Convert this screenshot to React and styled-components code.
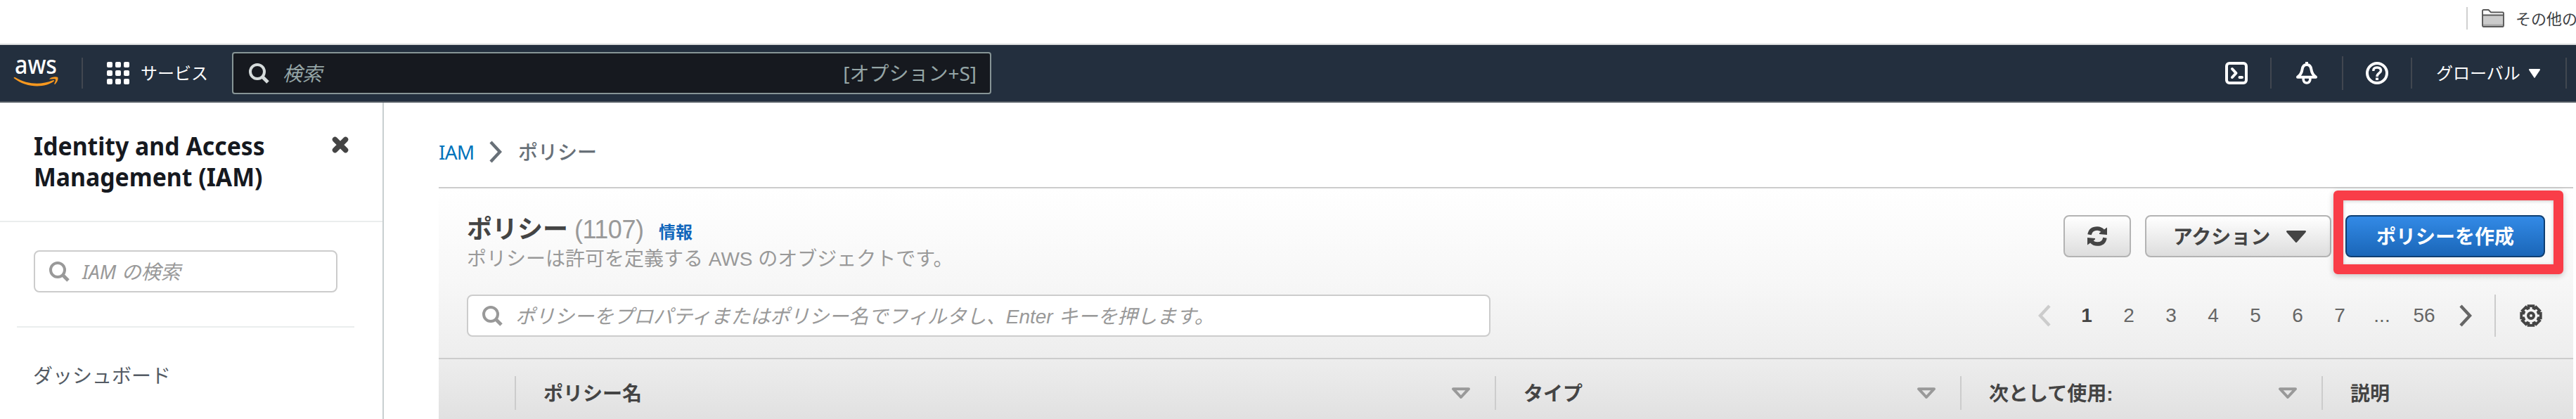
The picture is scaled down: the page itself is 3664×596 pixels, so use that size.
import React from "react";
import styled, { createGlobalStyle, css } from "styled-components";

const Global = createGlobalStyle`
  * { box-sizing: border-box; }
  html, body { margin: 0; background: #fff; overflow: hidden; }
  body { font-family: "Liberation Sans", "Noto Sans CJK JP", sans-serif; font-size: 28px; color: #444; }
  svg { flex: none; }
`;

const ember = css`font-family: "Noto Sans", "Noto Sans CJK JP", sans-serif;`;

const Page = styled.div`width: 3664px; height: 596px; overflow: hidden; display: flex; flex-direction: column;`;

const BookmarkBar = styled.div`
  height: 64px; flex: none; border-bottom: 2px solid #dadcdc; background: #fff;
  display: flex; align-items: flex-start; justify-content: flex-end; padding-top: 10px; overflow: hidden;
`;
const BookmarkFolder = styled.div`
  display: flex; align-items: center; gap: 16px; width: 156px; height: 32px; border-left: 2px solid #d0d0d0;
  padding-left: 20px; font-size: 22px; color: #3c4043; white-space: nowrap;
  span { padding-bottom: 3px; }
`;

const Nav = styled.header`
  ${ember} height: 82px; flex: none; background: #232f3e; border-bottom: 2px solid #545b64;
  display: flex; align-items: center; padding-left: 19px; color: #fff; font-size: 24px;
`;
const Rule = styled.i`display: block; flex: none; width: 2px; height: ${p => p.$h}px; background: ${p => p.$c || "#414750"};`;
const Label = styled.span`padding-bottom: 3px;`;
const Services = styled.div`display: flex; align-items: center; gap: 16px; margin-left: 34px; width: 178px; white-space: nowrap;`;
const NavSearch = styled.div`
  width: 1080px; height: 60px; background: #16191f; border: 2px solid #879596; border-radius: 4px; color: #95a5a6;
  display: flex; align-items: center; padding: 0 19px 0 22px; font-size: 28px;
  em { margin-left: 19px; flex: 1; padding-bottom: 2px; }
  svg { color: #d5dbdb; }
`;
const NavRight = styled.div`margin-left: auto; display: flex; align-items: center; height: 100%;`;
const NavItem = styled.div`display: flex; align-items: center; justify-content: center; width: ${p => p.$w}px;`;
const Region = styled(NavItem)`justify-content: flex-start; padding-left: 34px; gap: 12px;`;

const Body = styled.div`flex: 1; display: flex; min-height: 0;`;
const Sidebar = styled.aside`${ember} width: 546px; flex: none; border-right: 2px solid #c8cfd0; color: #16191f;`;
const SideHead = styled.div`
  height: 170px; border-bottom: 2px solid #eaeded; padding: 40px 48px 0 48px;
  display: flex; justify-content: space-between; align-items: flex-start;
  svg { margin-top: 8px; }
`;
const SideTitle = styled.h2`
  margin: 0; font-size: 35px; line-height: 44px; font-weight: 700; white-space: nowrap; width: 340px;
  transform: scaleX(0.965); transform-origin: left;
`;
const SideSearchArea = styled.div`margin: 0 40px 0 24px; padding: 40px 24px 48px; border-bottom: 2px solid #eaeded;`;
const SideLink = styled.div`padding: 46px 0 0 47px; font-size: 28px; line-height: 44px; color: #545b64;`;

const SearchField = styled.div`
  width: ${p => p.$w}px; height: 60px; border: 2px solid #ccc; border-radius: 8px; background: #fff;
  display: flex; align-items: center; gap: 18px; padding-left: 20px; color: #999; white-space: nowrap;
  em { padding-bottom: 2px; }
`;

const Main = styled.main`flex: 1; padding-left: 78px; display: flex; flex-direction: column; min-width: 0;`;
const Crumbs = styled.nav`
  ${ember} height: 120px; flex: none; display: flex; align-items: center; padding-top: 20px;
  color: #687078; font-weight: 500;
  a { color: #0073bb; font-weight: 400; width: 47px; margin-right: 24px; letter-spacing: -0.8px; }
  svg { margin-right: 22px; }
  span { padding-bottom: 2px; }
`;
const Panel = styled.section`
  width: 3036px; flex: 1; border-top: 2px solid #ccc; background: linear-gradient(#fff, #f7f7f7 40%, #eee 72%, #e1e1e1);
  display: flex; flex-direction: column;
`;
const PanelHead = styled.div`height: 151px; display: flex; justify-content: space-between; padding: 38px 40px 0 40px;`;
const TitleLine = styled.div`display: flex; align-items: baseline; white-space: nowrap; height: 42px; line-height: 42px;`;
const Title = styled.h1`margin: 0; font-size: 36px; font-weight: 700; width: 153px; color: #444;`;
const Count = styled.span`font-size: 36px; color: #999; width: 120px; letter-spacing: -0.5px;`;
const Info = styled.a`font-size: 24px; font-weight: 700; color: #16b;`;
const Desc = styled.p`margin: 1px 0 0; line-height: 40px; color: #999; white-space: nowrap;`;

const Actions = styled.div`display: flex; align-items: flex-start; gap: 20px;`;
const Button = styled.button`
  font: 700 28px "Liberation Sans", "Noto Sans CJK JP", sans-serif; height: 60px; width: ${p => p.$w}px; padding: 0;
  display: flex; align-items: center; justify-content: center; gap: 23px; border-radius: 8px; white-space: nowrap;
  border: 2px solid ${p => (p.$primary ? "#0f3f73" : "#b3b3b3")};
  color: ${p => (p.$primary ? "#fff" : "#444")};
  background: ${p => (p.$primary ? "linear-gradient(#338ae6, #1a66b8)" : "linear-gradient(#fff, #ddd)")};
  ${p => p.$menu && "padding-left: 4px;"}
`;
const Highlighted = styled.div`position: relative;`;
const Highlight = styled.div`
  position: absolute; left: -17px; top: -35px; width: 327px; height: 119px; border: 14px solid #f93d48; border-radius: 6px;
  box-shadow: 0 2px 8px rgba(0,0,0,.22), inset 0 1px 5px rgba(0,0,0,.2);
`;

const Filter = styled.div`height: 90px; display: flex; align-items: flex-start; padding: 0 44px 0 40px;`;
const Pager = styled.div`margin-left: auto; display: flex; align-items: center; height: 60px; color: #666;`;
const Pages = styled.div`display: flex; margin: 0 19px 0 20px;`;
const PageNo = styled.span`width: 60px; text-align: center; ${p => p.$on && "font-weight: 700; color: #444;"}`;
const Settings = styled.div`display: flex; align-items: center; gap: 34px; margin-left: 31px;`;

const TableHead = styled.div`flex: 1; border-top: 2px solid #ccc; display: flex; align-items: flex-start; padding: 24px 0 0 108px; font-weight: 700;`;
const Column = styled.div`
  width: ${p => p.$w}px; height: 48px; border-left: 2px solid #ccc; padding: 0 34px 0 39px;
  display: flex; align-items: center; justify-content: space-between; white-space: nowrap;
`;

const Magnifier = () => (
  <svg width="29" height="29" viewBox="0 0 29 29" fill="none" stroke="currentColor">
    <circle cx="12" cy="12" r="10" strokeWidth="4" /><path d="M19 19l8 8" strokeWidth="5" />
  </svg>
);
const Chevron = ({ left, color }) => (
  <svg width="20" height="32" viewBox="0 0 20 32" fill="none" stroke={color} strokeWidth="4.4">
    <path d={left ? "M17 2L4 16L17 30" : "M3 2L16 16L3 30"} />
  </svg>
);
const SortIcon = () => (
  <svg width="28" height="17" viewBox="0 0 28 17" fill="none" stroke="#999" strokeWidth="4" strokeLinejoin="round">
    <path d="M3 2.200H25L14 14z" />
  </svg>
);
const Caret = ({ w, h }) => (
  <svg width={w} height={h} viewBox="0 0 28 17" preserveAspectRatio="none"><path d="M1 0H27Q29 1 27 3L15 16.500Q14 17.500 13 16.500L1 3Q-1 1 1 0z" fill="currentColor" /></svg>
);
const Folder = () => (
  <svg width="32" height="26" viewBox="0 0 32 26">
    <path d="M1 9H31V24H1z" fill="#ccc" /><path d="M2 21.500H30V24H2z" fill="#aaa" />
    <path d="M1 23V2.500Q1 1 2.500 1H9.500L13 4.500H29.500Q31 4.500 31 6V23Q31 25 29.500 25H2.500Q1 25 1 23zM1 8.500H31" fill="none" stroke="#5a5a5a" strokeWidth="1.900" />
  </svg>
);

const cogPoints = Array.from({ length: 8 }, (_, i) =>
  [[-18, 11.2], [-14, 14.2], [14, 14.2], [18, 11.2]].map(([offset, r]) => {
    const a = ((i * 45 + offset) * Math.PI) / 180;
    return `${(16 + r * Math.sin(a)).toFixed(2)},${(16 - r * Math.cos(a)).toFixed(2)}`;
  }).join(" ")
).join(" ");
const Gear = () => (
  <svg width="32" height="32" viewBox="0 0 32 32" fill="none" stroke="#444">
    <polygon points={cogPoints} strokeWidth="3.800" />
    <circle cx="16" cy="16" r="4" strokeWidth="4" />
  </svg>
);

const LogoBox = styled.div`width: 97px; height: 42px; svg { display: block; overflow: visible; }`;
const Logo = () => (
  <LogoBox>
    <svg width="65" height="42" viewBox="0 0 65 42">
      <text x="2" y="22" fill="#fff" fontFamily="Noto Sans, sans-serif" fontSize="36" fontWeight="500" textLength="60" lengthAdjust="spacingAndGlyphs">aws</text>
      <path d="M0.500 28Q1 26 3 27.300C20 37.500 40 38 56 31.200Q59.500 30.300 57.500 32.800C45 42 19 43 0.500 28z" fill="#f7981f" />
      <path d="M51.500 29C54 26.500 60 25.500 63 26.800C64.500 29 62.500 34 59.500 36.800Q57.800 37.600 58.500 35.500C60 32 60.500 30.500 60 29.700C58.500 28.800 55.500 29.200 52.300 29.600Q50.500 29.800 51.500 29z" fill="#f7981f" />
    </svg>
  </LogoBox>
);
const Waffle = () => (
  <svg width="32" height="32" fill="#fff">
    {[0, 12, 24].map(y => [0, 12, 24].map(x => <rect key={x + "-" + y} x={x} y={y} width="8" height="8" rx="2" />))}
  </svg>
);

const columns = [
  { name: "ポリシー名", w: 1394 },
  { name: "タイプ", w: 662 },
  { name: "次として使用:", w: 514 },
  { name: "説明", w: 350, last: true },
];

export default function App() {
  return (
    <Page>
      <Global />
      <BookmarkBar><BookmarkFolder><Folder /><span>その他の</span></BookmarkFolder></BookmarkBar>
      <Nav>
        <Logo />
        <Rule $h={44} />
        <Services><Waffle /><Label>サービス</Label></Services>
        <NavSearch><Magnifier /><em>検索</em><Label>[オプション+S]</Label></NavSearch>
        <NavRight>
          <NavItem $w={96}>
            <svg width="32" height="32" viewBox="0 0 32 32" fill="none" stroke="#fff" strokeWidth="4" strokeLinecap="round" strokeLinejoin="round">
              <rect x="2" y="2" width="28" height="28" rx="4" /><path d="M10 10l5.500 6-5.500 6M20.500 22h3.500" />
            </svg>
          </NavItem>
          <Rule $h={44} />
          <NavItem $w={100}>
            <svg width="32" height="32" viewBox="0 0 32 32" fill="none" stroke="#fff" strokeWidth="4" strokeLinejoin="round">
              <path d="M16 0V4M3 21.700C8 18 9 15 9.500 11C10 7 12 4 16 4S22 7 22.500 11C23 15 24 18 29 21.700z" /><path d="M11.200 23V25.500Q12 30 16 30T20.800 25.500V23" strokeWidth="3.600" />
            </svg>
          </NavItem>
          <Rule $h={48} />
          <NavItem $w={96}>
            <svg width="32" height="32" viewBox="0 0 32 32" fill="none" stroke="#fff" strokeWidth="4">
              <circle cx="16" cy="16" r="14" /><path d="M10.800 13Q10.500 8 16 8T21.500 12.500C21.500 16 16 16 16 21" strokeWidth="3.500" /><path d="M14 22.500h4v3.500h-4z" fill="#fff" stroke="none" />
            </svg>
          </NavItem>
          <Rule $h={44} />
          <Region $w={218}><Label>グローバル</Label><Caret w={16} h={13} /></Region>
          <Rule $h={44} />
          <NavItem $w={13} />
        </NavRight>
      </Nav>
      <Body>
        <Sidebar>
          <SideHead>
            <SideTitle>Identity and Access<br />Management (IAM)</SideTitle>
            <svg width="24" height="24" viewBox="0 0 24 24" stroke="#444" strokeWidth="7.500" strokeLinecap="round"><path d="M4.500 4.500l15 15M19.500 4.500l-15 15" /></svg>
          </SideHead>
          <SideSearchArea><SearchField $w={432}><Magnifier /><em>IAM の検索</em></SearchField></SideSearchArea>
          <SideLink>ダッシュボード</SideLink>
        </Sidebar>
        <Main>
          <Crumbs><a>IAM</a><Chevron color="#687078" /><span>ポリシー</span></Crumbs>
          <Panel>
            <PanelHead>
              <div>
                <TitleLine><Title>ポリシー</Title><Count>(1107)</Count><Info>情報</Info></TitleLine>
                <Desc>ポリシーは許可を定義する AWS のオブジェクトです。</Desc>
              </div>
              <Actions>
                <Button $w={96}>
                  <svg width="28" height="28" viewBox="0 0 28 28" fill="none" stroke="#444" strokeWidth="5.500">
                    <path d="M3 11.800C4 6 8 2.900 14 2.900Q19 2.900 22 6.500M25 16.200C24 22 20 25.100 14 25.100Q9 25.100 6 21.500" />
                    <path d="M28 1.500V12L17 11V9.500zM0 26.500V16L11 17V18.500z" fill="#444" stroke="none" />
                  </svg>
                </Button>
                <Button $w={265} $menu><Label>アクション</Label><Caret w={28} h={17} /></Button>
                <Highlighted><Button $w={284} $primary><Label>ポリシーを作成</Label></Button><Highlight /></Highlighted>
              </Actions>
            </PanelHead>
            <Filter>
              <SearchField $w={1456}><Magnifier /><em>ポリシーをプロパティまたはポリシー名でフィルタし、Enter キーを押します。</em></SearchField>
              <Pager>
                <Chevron left color="#ccc" />
                <Pages>
                  {["1", "2", "3", "4", "5", "6", "7", "...", "56"].map(n => <PageNo key={n} $on={n === "1"}>{n}</PageNo>)}
                </Pages>
                <Chevron color="#666" />
                <Settings><Rule $h={60} $c="#ccc" /><Gear /></Settings>
              </Pager>
            </Filter>
            <TableHead>
              {columns.map(c => <Column key={c.name} $w={c.w}><Label>{c.name}</Label>{!c.last && <SortIcon />}</Column>)}
            </TableHead>
          </Panel>
        </Main>
      </Body>
    </Page>
  );
}
